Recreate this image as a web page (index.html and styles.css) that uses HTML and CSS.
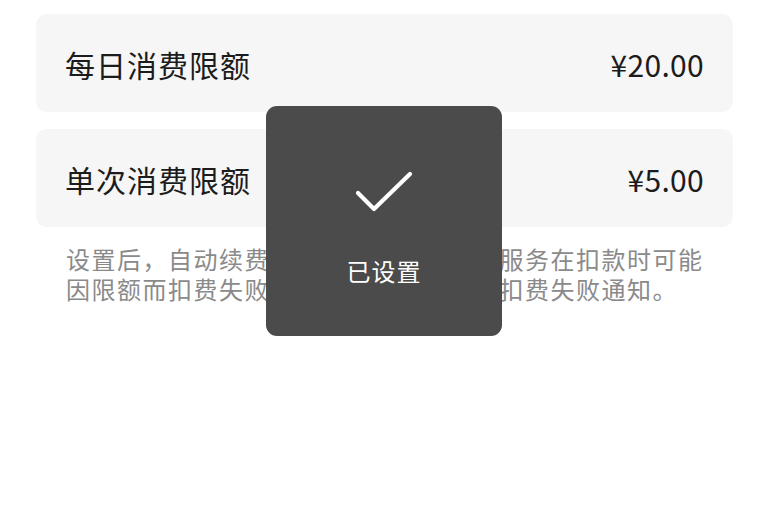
FILE: index.html
```html
<!DOCTYPE html>
<html lang="zh-CN">
<head>
<meta charset="utf-8">
<title>消费限额</title>
<link rel="stylesheet" href="styles.css">
</head>
<body>
<main class="page">
  <div class="card">
    <span class="label">每日消费限额</span>
    <span class="value">¥20.00</span>
  </div>
  <div class="card">
    <span class="label">单次消费限额</span>
    <span class="value">¥5.00</span>
  </div>
  <p class="note">设置后，自动续费、免密支付、代扣等服务在扣款时可能<br>因限额而扣费失败，届时将在微信收到扣费失败通知。</p>
</main>
<div class="toast">
  <svg class="toast-icon" viewBox="0 0 58 42" width="58" height="42" aria-hidden="true">
    <polyline points="3,22 19,38 55,3" fill="none" stroke="#ffffff" stroke-width="4.2" stroke-linecap="round" stroke-linejoin="round"/>
  </svg>
  <div class="toast-text">已设置</div>
</div>
</body>
</html>
```

FILE: styles.css
```css
html, body {
  margin: 0;
  padding: 0;
  background: #ffffff;
}

body {
  font-family: "Noto Sans CJK SC", "Noto Sans", sans-serif;
  color: #1c1c1c;
  width: 768px;
  height: 510px;
  overflow: hidden;
}

.page {
  padding: 14px 35px 0 36px;
  display: flex;
  flex-direction: column;
  gap: 17px;
}

.card {
  height: 98px;
  background: #f6f6f6;
  border-radius: 11px;
  display: flex;
  align-items: center;
  justify-content: space-between;
  padding: 2px 29px 0 29px;
  box-sizing: border-box;
}

.label {
  font-size: 30px;
  letter-spacing: 1px;
  line-height: 1;
}

.value {
  font-size: 30px;
  line-height: 1;
  letter-spacing: 0.3px;
}

.note {
  margin: 0 0 0 30px;
  font-size: 24px;
  letter-spacing: 1.5px;
  line-height: 30px;
  color: #8a8a8a;
  white-space: nowrap;
}

.toast {
  position: absolute;
  left: 266px;
  top: 106px;
  width: 236px;
  height: 230px;
  background: #4b4b4b;
  border-radius: 11px;
  display: flex;
  flex-direction: column;
  align-items: center;
  padding-top: 65px;
  box-sizing: border-box;
}

.toast-icon {
  display: block;
}

.toast-text {
  margin-top: 46px;
  color: #ffffff;
  font-size: 24px;
  line-height: 24px;
  letter-spacing: 1px;
}
```
